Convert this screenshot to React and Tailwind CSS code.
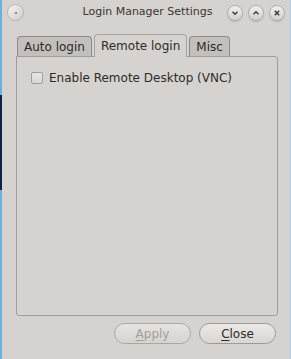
import React, { useState } from 'react';

const font = { fontFamily: '"DejaVu Sans", "Noto Sans", sans-serif' };

const TitleButton = ({ children }) => (
  <div className="w-[16px] h-[16px] rounded-full border border-[#b3afac] bg-gradient-to-b from-[#f2f0ee] to-[#d3cfcc] flex items-center justify-center shadow-[0_1px_1px_rgba(0,0,0,0.15)]">
    {children}
  </div>
);

const App = () => {
  const [tab, setTab] = useState('remote');
  const [vnc, setVnc] = useState(false);

  const tabs = [
    { id: 'auto', label: 'Auto login' },
    { id: 'remote', label: 'Remote login' },
    { id: 'misc', label: 'Misc' },
  ];

  return (
    <div className="w-[291px] h-[359px] bg-[#d6d2cf] relative overflow-hidden text-[#2e2a28]" style={font}>
      {/* window edges */}
      <div className="absolute left-0 top-0 bottom-0 w-[2px] bg-[#6cb0dc]" />
      <div className="absolute left-0 top-[95px] h-[95px] w-[2px] bg-[#10204a]" />
      <div className="absolute right-0 top-0 bottom-0 w-[1px] bg-[#a9d2ea]" />

      {/* Title bar */}
      <div className="h-[25px] flex items-center pl-[7px] pr-[6px]">
        <div className="w-[17px] h-[17px] rounded-full border border-[#b8b4b1] bg-gradient-to-br from-[#f6f5f4] to-[#cfcbc8] flex items-center justify-center">
          <div className="w-[2px] h-[2px] rounded-full bg-[#6d6965]" />
        </div>
        <div className="flex-1 text-center text-[11px] text-[#3a3633] pl-[44px]">Login Manager Settings</div>
        <div className="flex items-center gap-[5px]">
          <TitleButton>
            <svg width="8" height="8" viewBox="0 0 8 8"><path d="M1.5 2.8 L4 5.3 L6.5 2.8" fill="none" stroke="#3c3835" strokeWidth="1.4" /></svg>
          </TitleButton>
          <TitleButton>
            <svg width="8" height="8" viewBox="0 0 8 8"><path d="M1.5 5.2 L4 2.7 L6.5 5.2" fill="none" stroke="#3c3835" strokeWidth="1.4" /></svg>
          </TitleButton>
          <TitleButton>
            <svg width="8" height="8" viewBox="0 0 8 8"><path d="M1.8 1.8 L6.2 6.2 M6.2 1.8 L1.8 6.2" fill="none" stroke="#3c3835" strokeWidth="1.4" /></svg>
          </TitleButton>
        </div>
      </div>

      {/* Tabs */}
      <div className="px-[16px] pt-[9px]">
        <div className="flex items-end pl-[1px] h-[22px]">
          {tabs.map((t) => {
            const active = tab === t.id;
            return (
              <button
                key={t.id}
                onClick={() => setTab(t.id)}
                className={
                  active
                    ? 'relative z-10 -mb-[1px] h-[23px] px-[6px] mr-[2px] rounded-t-[4px] border border-b-0 border-[#a8a4a1] bg-[#d6d2cf] text-[12px] text-[#2e2a28] leading-none'
                    : 'h-[20px] px-[6px] mr-[2px] rounded-t-[4px] border border-b-0 border-[#8f8b88] bg-[#c3bfbc] text-[12px] text-[#2e2a28] leading-none'
                }
              >
                {t.label}
              </button>
            );
          })}
        </div>

        {/* Panel */}
        <div className="h-[260px] w-[262px] border border-[#a19d9a] rounded-b-[3px] rounded-tr-[3px] bg-[#d6d2cf] pt-[12px] pl-[14px]">
          {tab === 'remote' && (
            <label className="flex items-center gap-[6px] text-[12px] cursor-pointer">
              <span
                onClick={() => setVnc(!vnc)}
                className="w-[12px] h-[12px] rounded-[2px] border border-[#a29e9b] bg-gradient-to-b from-[#e9e7e5] to-[#d9d6d3] flex items-center justify-center"
              >
                {vnc && <span className="text-[9px] leading-none">✓</span>}
              </span>
              <span>Enable Remote Desktop (VNC)</span>
            </label>
          )}
        </div>
      </div>

      {/* Buttons */}
      <div className="flex justify-end gap-[8px] pr-[15px] pt-[7px]">
        <button className="w-[77px] h-[21px] rounded-full border border-[#aaa6a3] bg-gradient-to-b from-[#e6e3e1] to-[#d7d3d0] text-[12px] text-[#a29e9b] leading-none">
          <span className="underline underline-offset-2">A</span>pply
        </button>
        <button className="w-[77px] h-[21px] rounded-full border border-[#9e9a97] bg-gradient-to-b from-[#ebe9e7] to-[#d9d5d2] text-[12px] text-[#2e2a28] leading-none">
          <span className="underline underline-offset-2">C</span>lose
        </button>
      </div>
    </div>
  );
};

export default App;
